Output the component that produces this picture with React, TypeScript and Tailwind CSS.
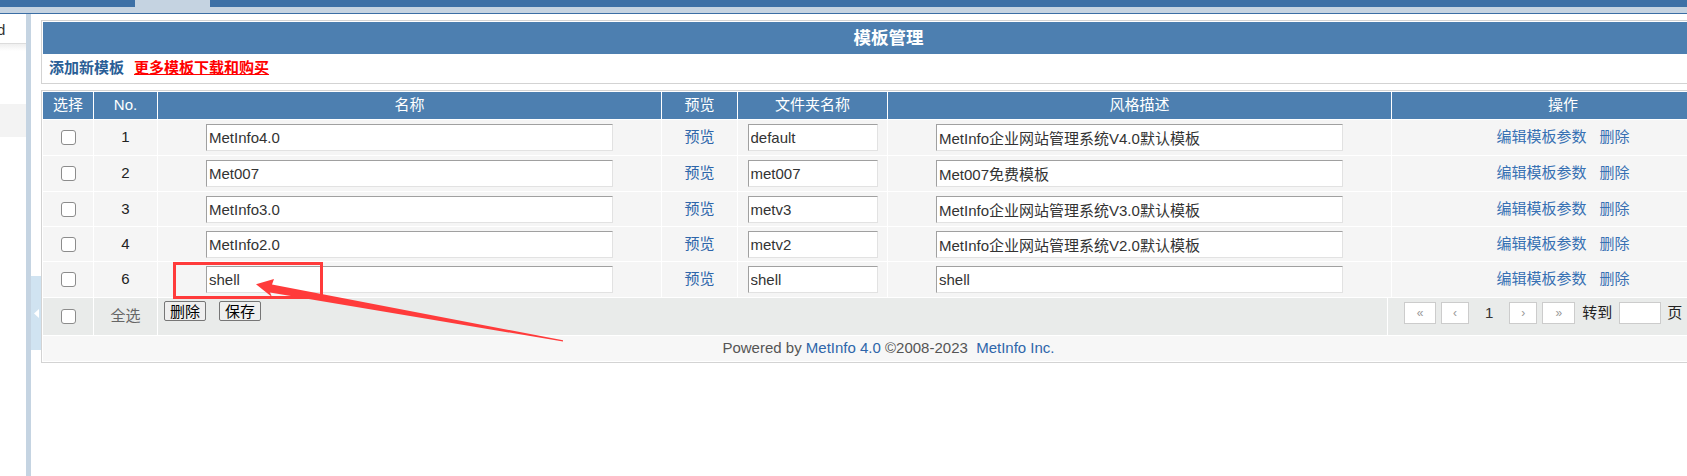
const rows = [
  { no: 1, name: 'MetInfo4.0', folder: 'default', desc: 'MetInfo企业网站管理系统V4.0默认模板', h: 'h-[35px]' },
  { no: 2, name: 'Met007', folder: 'met007', desc: 'Met007免费模板', h: 'h-[35px]' },
  { no: 3, name: 'MetInfo3.0', folder: 'metv3', desc: 'MetInfo企业网站管理系统V3.0默认模板', h: 'h-[34px]' },
  { no: 4, name: 'MetInfo2.0', folder: 'metv2', desc: 'MetInfo企业网站管理系统V2.0默认模板', h: 'h-[34px]' },
  { no: 6, name: 'shell', folder: 'shell', desc: 'shell', h: 'h-[35px]' },
];

const cols = 'grid grid-cols-[50px_63px_503px_75px_149px_503px_342px] gap-x-px';
const field =
  'h-[27px] border border-t-[#a0a0a0] border-l-[#a0a0a0] border-r-[#e2e2e2] border-b-[#e2e2e2] bg-white px-[2px] text-[15px] text-[#333] outline-none';
const pageBox = 'flex h-[22px] items-center justify-center border border-[#cccccc] bg-white text-[12px] text-[#999]';

function Check() {
  return <span className="block h-[15px] w-[15px] rounded-[3px] border-[1.5px] border-[#8c8c8c] bg-white" />;
}

export default function App() {
  return (
    <div className="relative h-[476px] w-[1687px] overflow-hidden bg-white font-['Liberation_Sans','Noto_Sans_CJK_SC',sans-serif] text-[15px] text-[#333]">
      {/* top bar */}
      <div className="h-[14px] border-b border-[#3b6ea5] bg-[#c5d3e1]">
        <div className="flex h-[7px]">
          <div className="w-[135px] bg-[#3d70a6]" />
          <div className="w-[75px]" />
          <div className="flex-1 bg-[#3d70a6]" />
        </div>
      </div>

      <div className="flex h-[462px]">
        {/* sidebar */}
        <div className="w-[26px] shrink-0 overflow-hidden">
          <div className="h-[30px] border-b border-[#dcdcdc] pt-[2px] leading-[27px] text-[#333]">
            <span className="ml-[-3px] whitespace-nowrap">d</span>
          </div>
          <div className="h-[7px] bg-gradient-to-b from-[#efefef] to-white" />
          <div className="mt-[53px] h-[33px] bg-[#f3f3f3]" />
        </div>
        <div className="w-[5px] shrink-0 bg-[#c5d4e2]" />
        <div className="w-[10px] shrink-0 pt-[262px]">
          <div className="flex h-[74px] items-center bg-[#d0e3f1] pl-[3px]">
            <svg width="5" height="9" viewBox="0 0 5 9">
              <polygon points="5,0 0,4.5 5,9" fill="#ffffff" />
            </svg>
          </div>
        </div>

        {/* main */}
        <div className="w-[1695px] shrink-0 pt-[6px]">
          <div className="border border-[#d3d3d3] p-px">
            <div className="flex h-[32px] items-center justify-center bg-[#4d7fb0] text-[17.5px] font-bold text-white">
              模板管理
            </div>
            <div className="flex h-[28px] items-center gap-[10px] bg-white pl-[6px] font-bold">
              <a className="text-[#2a5e96]">添加新模板</a>
              <a className="text-[#ff0000] underline">更多模板下载和购买</a>
            </div>
          </div>

          <div className="mt-[6px] border border-[#d3d3d3] p-px">
            <div className="flex flex-col gap-y-px bg-white">
              <div className={`${cols} h-[27px]`}>
                {['选择', 'No.', '名称', '预览', '文件夹名称', '风格描述', '操作'].map((t) => (
                  <div key={t} className="flex items-center justify-center bg-[#4d7fb0] text-white">
                    {t}
                  </div>
                ))}
              </div>

              {rows.map((r) => (
                <div key={r.no} className={`${cols} ${r.h}`}>
                  <div className="flex items-center justify-center bg-[#f5f5f5]">
                    <Check />
                  </div>
                  <div className="flex items-center justify-center bg-[#f5f5f5] text-[#222]">{r.no}</div>
                  <div className="flex items-center justify-center bg-[#f5f5f5]">
                    <input className={`${field} w-[407px]`} defaultValue={r.name} />
                  </div>
                  <div className="flex items-center justify-center bg-[#f5f5f5]">
                    <a className="text-[#2e66aa]">预览</a>
                  </div>
                  <div className="flex items-center justify-center bg-[#f5f5f5]">
                    <input className={`${field} w-[130px]`} defaultValue={r.folder} />
                  </div>
                  <div className="flex items-center justify-center bg-[#f5f5f5]">
                    <input className={`${field} w-[407px]`} defaultValue={r.desc} />
                  </div>
                  <div className="flex items-center justify-center gap-[13px] bg-[#f5f5f5] text-[#3770b3]">
                    <a>编辑模板参数</a>
                    <a>删除</a>
                  </div>
                </div>
              ))}

              <div className="grid h-[37px] grid-cols-[50px_63px_1229px_346px] gap-x-px">
                <div className="flex items-center justify-center bg-[#e9ebea]">
                  <Check />
                </div>
                <div className="flex items-center justify-center bg-[#e9ebea] text-[#666]">全选</div>
                <div className="flex items-start gap-[13px] bg-[#e9ebea] pl-[6px] pt-[3px]">
                  <button className="h-[20px] rounded-[2px] border border-[#767676] bg-[#efefef] px-[5px] leading-none text-black">
                    删除
                  </button>
                  <button className="h-[20px] rounded-[2px] border border-[#767676] bg-[#efefef] px-[5px] leading-none text-black">
                    保存
                  </button>
                </div>
                <div className="flex items-start bg-[#e9ebea] pl-[16px] pt-[4px]">
                  <div className="flex items-center">
                    <span className={`${pageBox} w-[32px]`}>«</span>
                    <span className={`${pageBox} ml-[5px] w-[28px]`}>‹</span>
                    <span className="mx-[16px] text-[#333]">1</span>
                    <span className={`${pageBox} w-[28px]`}>›</span>
                    <span className={`${pageBox} ml-[5px] w-[33px]`}>»</span>
                    <span className="ml-[7px] text-[#222]">转到</span>
                    <input className="ml-[7px] h-[22px] w-[42px] border border-[#cccccc] bg-white outline-none" />
                    <span className="ml-[6px] text-[#222]">页</span>
                    <button className="ml-[5px] h-[22px] rounded-[2px] border border-[#767676] bg-[#efefef] px-[5px] text-[13px] leading-none text-black">
                      GO
                    </button>
                  </div>
                </div>
              </div>

              <div className="flex h-[25px] items-center justify-center bg-[#f7f7f7] text-[#555]">
                Powered by&nbsp;<a className="text-[#2e66aa]">MetInfo 4.0</a>&nbsp;©2008-2023&nbsp;&nbsp;
                <a className="text-[#2e66aa]">MetInfo Inc.</a>
              </div>
            </div>
          </div>
        </div>
      </div>

      {/* red annotation */}
      <svg className="pointer-events-none absolute left-0 top-0" width="1687" height="476">
        <rect x="174.5" y="263.5" width="147" height="34" fill="none" stroke="#ff3b3b" strokeWidth="3" />
        <polygon
          points="256,284.3 274,279 272,284.5 563,340.3 563,341.5 270,292.5 272,297"
          fill="#ff3b3b"
        />
      </svg>
    </div>
  );
}
